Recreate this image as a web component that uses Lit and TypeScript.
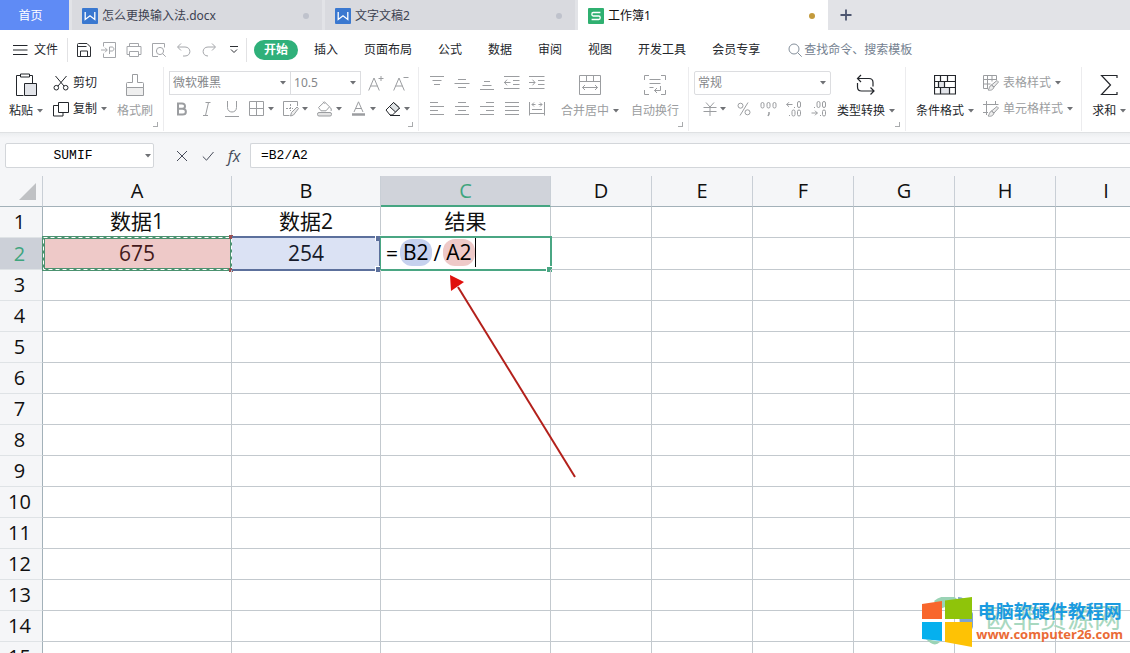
import { LitElement, html, svg, css, nothing, TemplateResult, SVGTemplateResult } from "lit";
import { customElement, property } from "lit/decorators.js";
import { classMap } from "lit/directives/class-map.js";
import { styleMap } from "lit/directives/style-map.js";

type Glyph = { w: number; h: number; body: SVGTemplateResult };

const GLYPHS: Record<string, Glyph> = {
  caret: { w: 6, h: 4, body: svg`<path d="M0 0h6L3 3.6z" fill="#6f7175" stroke="none"/>` },
  writer: {
    w: 16, h: 16,
    body: svg`<rect width="16" height="16" rx="1" fill="#3a78d0" stroke="none"/><path d="M3.2 4v7.500L8 7.800l4.800 3.700V4" stroke="#fff" stroke-width="1.3"/>`,
  },
  sheets: {
    w: 16, h: 16,
    body: svg`<rect width="16" height="16" rx="1" fill="#2fb070" stroke="none"/><path d="M12.4 4.5H5.2C3.4 4.5 3.4 8 5.2 8h5.6c1.900 0 1.900 3.500 0 3.500H3.600" stroke="#fff" stroke-width="1.3"/>`,
  },
  plus: { w: 12, h: 12, body: svg`<path d="M6 .5v11M.5 6h11" stroke="#4d5670" stroke-width="1.800"/>` },
  menu: { w: 15, h: 10, body: svg`<path d="M0 .5h14.500M0 5h14.500M0 9.500h14.500"/>` },
  save: { w: 16, h: 16, body: svg`<path d="M1.500 14.500v-12q0-1 1-1h8.500l3.500 3.500v9.500zM1.500 4.500h9M4.500 14.500v-5.500h7v5.500"/>` },
  pdf: { w: 16, h: 16, body: svg`<path d="M2.500 4.500v-4h12v15h-12v-4M0 8h6M4 5.700 6.300 8 4 10.300M8.500 12V5h2.500c2.500 0 2.500 4 0 4H8.500"/>` },
  print: { w: 16, h: 16, body: svg`<path d="M3.500 4.500v-3h9v3M3.500 12.500h-2.500v-8h14v8h-2.500M3.500 9.500h9v5h-9z"/>` },
  preview: { w: 16, h: 16, body: svg`<path d="M7 14.500H1.500v-13h12v4"/><circle cx="9" cy="9" r="3.600"/><path d="m11.700 11.700 3 3"/>` },
  undo: { w: 16, h: 16, body: svg`<path d="M5 1.500 1.500 5 5 8.500M2 5h7c6.500 0 6.500 9 0 9H7"/>` },
  redo: { w: 16, h: 16, body: svg`<path d="M11 1.500 14.500 5 11 8.500M14 5H7c-6.500 0-6.500 9 0 9"/>` },
  more: { w: 8, h: 8, body: svg`<path d="M0 .5h8M1 3.500l3 3 3-3"/>` },
  search: { w: 14, h: 14, body: svg`<circle cx="6" cy="6" r="5"/><path d="m9.700 9.700 4 4"/>` },
  paste: {
    w: 22, h: 24,
    body: svg`<path d="M8.500 22.500h-7v-20h4M14.500 2.500h3v8M5.500 1h9v3h-9z"/><path d="M9.500 10.500h12v12h-12z" fill="#e2e4e9"/>`,
  },
  cut: { w: 16, h: 16, body: svg`<path d="M2.500 1 11 11M13.500 1 5 11"/><circle cx="3.300" cy="12.700" r="2.300"/><circle cx="12.700" cy="12.700" r="2.300"/>` },
  copy: { w: 16, h: 16, body: svg`<path d="M5.500 1.500h10v10h-10zM5.500 4.500h-5v10.500h9.500v-3.500"/>` },
  brush: { w: 20, h: 24, body: svg`<path d="M7.500 9.500V1.500h5v8h5q1 0 1 1v4h-17v-4q0-1 1-1z"/><path d="M1.500 14.500h17v8h-17z" fill="#efefef"/>` },
  growFont: { w: 16, h: 16, body: svg`<path d="M.7 15.500 6 3l5.300 12.500M2.500 11h7M10.500 3.500h5M13 1v5"/>` },
  shrinkFont: { w: 16, h: 16, body: svg`<path d="M.7 15.500 6 3l5.300 12.500M2.500 11h7M10.500 2.500h5"/>` },
  bold: { w: 12, h: 14, body: svg`<path d="M2 1.500v11h4.500c4.500 0 4.500-5.700 0-5.700H2h4c4 0 4-5.300 0-5.300z" stroke-width="2"/>` },
  italic: { w: 10, h: 14, body: svg`<path d="M3.500.5h5M1 13.500h5M6.500.5l-3 13"/>` },
  underline: { w: 14, h: 16, body: svg`<path d="M2.500 0v6.500c0 6 9 6 9 0V0M0 15.500h14"/>` },
  borders: { w: 16, h: 16, body: svg`<path d="M.5 .5h14v14H.5zM7.500 .5v14M.5 7.500h14"/>` },
  drawBorder: { w: 16, h: 16, body: svg`<path d="M6.500 14.500h-6V.5h14V5"/><path d="M7.500 3v7M3 7.500h7" stroke-dasharray="2 1"/><path d="m7.500 15 1-3.500 5.500-5.500 1.500 1.500L10.500 14z" fill="#eee"/>` },
  fill: { w: 16, h: 16, body: svg`<path d="M1.500 6.500 7.500 .8l5 5-3.500 4h-5zM6 .8l2 2M12.500 6c2 1 2 3 1.500 4"/><rect x=".5" y="11.500" width="14" height="3.500" rx="1.500" fill="#e4e4e4"/>` },
  fontColor: { w: 16, h: 16, body: svg`<path d="M3 11 7.500 .8 12 11M4.700 7.500h5.600"/><path d="M1 13.500h13" stroke-width="2.500"/>` },
  eraser: { w: 16, h: 16, body: svg`<path d="M1 9 8.500 1.500l6 5.500L7.500 14H5z"/><path d="M4.500 5.500 8.500 1.500l6 5.500-4 4z" fill="#dfe3e5"/><path d="M5 14.500h10"/>` },
  alignTop: { w: 16, h: 16, body: svg`<path d="M1 1.500h14M3.500 5.500h9M5 9.500h6"/>` },
  alignMiddle: { w: 16, h: 16, body: svg`<path d="M4 4.500h8M.5 8.500h15M4 12.500h8"/>` },
  alignBottom: { w: 16, h: 16, body: svg`<path d="M5 6.500h6M3.500 10.500h9M1 14.500h14"/>` },
  outdent: { w: 16, h: 16, body: svg`<path d="M0 1.500h15.500M9 5.500h6.500M9 9.500h6.500M0 13.500h15.500M0 7.500h6.500M3 4.700.5 7.500 3 10.300"/>` },
  indent: { w: 16, h: 16, body: svg`<path d="M0 1.500h15.500M9 5.500h6.500M9 9.500h6.500M0 13.500h15.500M0 7.500h6M3.500 4.700 6 7.500 3.500 10.300"/>` },
  left: { w: 16, h: 16, body: svg`<path d="M1 1.500h8M1 5.500h14M1 9.500h8M1 13.500h14"/>` },
  center: { w: 16, h: 16, body: svg`<path d="M4 1.500h8M1 5.500h14M4 9.500h8M1 13.500h14"/>` },
  right: { w: 16, h: 16, body: svg`<path d="M7 1.500h8M1 5.500h14M7 9.500h8M1 13.500h14"/>` },
  justify: { w: 16, h: 16, body: svg`<path d="M1 1.500h14M1 5.500h14M1 9.500h14M1 13.500h14"/>` },
  distribute: { w: 16, h: 16, body: svg`<path d="M.5 1v13.500M15.500 1v13.500M3 8.500h10M.5 12.500h15M3 3.500h3.500M9.500 3.500H13M5 1.500 3 3.500l2 2M11 1.500l2 2-2 2"/>` },
  merge: { w: 22, h: 20, body: svg`<path d="M.5 .5h21v19H.5zM.5 6.500h21M7.500 .5v6M14.500 .5v6M3.500 12.500h15M6 10l-2.500 2.500L6 15M16 10l2.500 2.500L16 15"/>` },
  wrap: { w: 22, h: 20, body: svg`<path d="M.5 5V.5H5M17 .5h4.500V5M.5 15v4.500H5M17 19.500h4.500V15M5.500 4.500h11M5.500 8.500h11M5.500 12.500h4M16.500 11v4.500h-6M13 13l-2.500 2.500L13 18"/>` },
  yuan: { w: 14, h: 14, body: svg`<path d="M3 .5l4 4.500 4-4.500M.5 5.500h13M.5 9.500h13M7 5v9"/>` },
  percent: { w: 14, h: 14, body: svg`<circle cx="3.500" cy="3.700" r="2.500"/><circle cx="10.500" cy="10.300" r="2.500"/><path d="M11 .5 3 13.500"/>` },
  thousands: { w: 18, h: 16, body: svg`<rect x="1" y="1.500" width="3" height="5.500" rx="1.500"/><rect x="7" y="1.500" width="3" height="5.500" rx="1.500"/><rect x="13" y="1.500" width="3" height="5.500" rx="1.500"/><path d="M9 11v2l-1 2" stroke-width="1.500"/>` },
  moreDecimals: { w: 16, h: 16, body: svg`<path d="M.5 3.500h6M3 1.200.7 3.500 3 5.800M8.500 6v1M3.500 14v1"/><rect x="11.500" y=".5" width="3" height="6" rx="1.500"/><rect x="6" y="9" width="3" height="6" rx="1.500"/><rect x="11.500" y="9" width="3" height="6" rx="1.500"/>` },
  lessDecimals: { w: 16, h: 16, body: svg`<path d="M.5 12h6M4 9.700 6.300 12 4 14.300M9.500 14v1M3.500 6v1"/><rect x="11.500" y=".5" width="3" height="6" rx="1.500"/><rect x="6" y=".5" width="3" height="6" rx="1.500"/><rect x="11.500" y="9" width="3" height="6" rx="1.500"/>` },
  convert: { w: 20, h: 22, body: svg`<path d="M5 1 1.500 4.500 5 8M2 4.500h11q4 0 4 4v4M1.500 9v4q0 4 4 4H18M14.500 13.500 18 17l-3.500 3.500" stroke-width="1.200"/>` },
  conditional: {
    w: 22, h: 20,
    body: svg`<path d="M5 6.500h6v6H5zM7 12.500h9v6.500H7z" fill="#e2e4e9" stroke="none"/><path d="M.5 .5h21v18.500H.5zM.5 6.500h21M.5 12.500h21M6.500 .5v6M13.500 .5v6M10.500 6.500v6M4.500 6.500v6M6.500 12.500v6.500M15.500 12.500v6.500" stroke-width="1.200"/>`,
  },
  tableStyle: { w: 16, h: 16, body: svg`<path d="M5 13.500H.5V.5h13V5M.5 4.500h13M.5 9h7M4.500 .5v13M9 .5v6"/><path d="m8.500 10 5.500-4.500 1.500 1.500-4.500 5zM8.500 10l2.500 2c-1 3.500-4 3.500-6 3 1.500-1 1-4 3.500-5z" fill="#eee"/>` },
  cellStyle: { w: 16, h: 16, body: svg`<path d="M3.500 0v14M12.500 0v4M0 3.500h15.500M0 11.500h5"/><path d="m8.500 10 5.500-4.500 1.500 1.500-4.500 5zM8.500 10l2.500 2c-1 3.500-4 3.500-6 3 1.500-1 1-4 3.500-5z" fill="#eee"/>` },
  sum: { w: 18, h: 20, body: svg`<path d="M17 3V.5H1.500L10.500 10 1.500 19.500H17V17" stroke-width="1.200"/>` },
  cancel: { w: 12, h: 12, body: svg`<path d="m1 1 10 10M11 1 1 11"/>` },
  accept: { w: 12, h: 12, body: svg`<path d="m.8 6.500 3.700 3.700L11.500 2"/>` },
};

@customElement("wps-icon")
class WpsIcon extends LitElement {
  static styles = css`
    :host { display: inline-flex; flex: none; }
    svg { display: block; fill: none; stroke: currentColor; stroke-width: 1; }
  `;
  @property() name = "caret";
  render() {
    const g = GLYPHS[this.name];
    return html`<svg width=${g.w} height=${g.h} viewBox="0 0 ${g.w} ${g.h}" aria-hidden="true">${g.body}</svg>`;
  }
}

const COLUMNS = [
  { id: "A", width: 189 }, { id: "B", width: 149 }, { id: "C", width: 170 },
  ..."DEFGHI".split("").map((id) => ({ id, width: 101 })),
];
const VALUES: Record<string, string> = { A1: "数据1", B1: "数据2", C1: "结果", A2: "675", B2: "254" };
const MENU_TABS = ["插入", "页面布局", "公式", "数据", "审阅", "视图", "开发工具", "会员专享"];
const QUICK = [
  ["save", "保存"], ["pdf", "输出为PDF"], ["print", "打印"], ["preview", "打印预览"],
  ["undo", "撤销"], ["redo", "恢复"], ["more", "自定义"],
];

@customElement("app-root")
class AppRoot extends LitElement {
  static styles = css`
    :host {
      display: flex; flex-direction: column; height: 100vh; overflow: hidden;
      background: #fff; color: #23262b;
      font: 12px/16px "Noto Sans", "Noto Sans CJK SC", sans-serif;
    }
    * { box-sizing: border-box; }
    button, input, select {
      font: inherit; color: inherit; border: 0; margin: 0; padding: 0; background: none; outline: none;
    }
    button { display: flex; align-items: center; justify-content: center; white-space: nowrap; flex: none; }

    .tabs { display: flex; flex: none; height: 30px; background: #e2e3e7; }
    .home { width: 69px; background: #5f8bf5; color: #fff; margin-right: 3px; padding: 2px 8px 0 0; }
    .doc { display: flex; align-items: center; gap: 4px; width: 250px; margin-right: 3px; padding: 2px 13px 0 10px; background: #d9dadf; color: #3d4251; }
    .doc.current { background: #fff; color: #111; margin-right: 0; }
    .doc button { flex: 1; justify-content: flex-start; gap: 4px; }
    .dot { width: 6px; height: 6px; border-radius: 50%; background: #bfc2cc; }
    .current .dot { background: #c39a3c; }
    .new { width: 36px; }

    .menu { display: flex; flex: none; align-items: center; height: 36px; padding: 3px 0 0 13px; }
    .file { gap: 6px; }
    .rule { width: 1px; height: 24px; background: #e2e2e4; }
    .file + .rule { margin: 0 3px 0 9px; }
    .quick { display: flex; color: #a4a6aa; }
    .quick button { width: 25px; height: 24px; }
    .quick button:first-child, .quick button:last-child { color: #2d3035; }
    .pill { margin: 0 16px 0 7px; width: 44px; height: 20px; border-radius: 10px; background: #2fb07a; color: #fff; font-weight: 700; }
    .menu-tabs { display: flex; gap: 26px; margin-right: 28px; }
    .search { display: flex; align-items: center; gap: 2px; flex: 1; color: #85909c; }
    .search input { flex: 1; min-width: 0; }
    .search input::placeholder { color: #748190; opacity: 1; }

    .ribbon { display: flex; flex: none; height: 67px; padding: 1px 0; border-bottom: 1px solid #dfe1e3; }
    .group { position: relative; display: flex; flex: none; padding: 3px 0 8px; border-right: 1px solid #ececee; }
    .group:last-child { border: 0; }
    .corner { position: absolute; right: 5px; bottom: 4px; width: 5px; height: 5px; border: solid #a9abad; border-width: 0 1px 1px 0; }
    .clip { padding-left: 9px; padding-right: 10px; gap: 10px; }
    .font { padding-left: 5px; padding-right: 4px; }
    .align { padding-left: 5px; padding-right: 9px; gap: 12px; }
    .number { padding-left: 5px; padding-right: 10px; gap: 6px; }
    .styles { padding-left: 10px; padding-right: 8px; gap: 9px; }
    .total { padding-left: 10px; }
    .rows { display: flex; flex-direction: column; }
    .row { display: flex; align-items: center; height: 26px; }
    .tall { flex-direction: column; justify-content: space-between; padding: 2px 0 4px; }
    .tall .art { display: flex; align-items: center; height: 26px; }
    .label, .line { display: flex; align-items: center; gap: 4px; }
    .line { height: 26px; justify-content: flex-start; }
    .small { width: 25px; height: 26px; }
    .drop { width: 34px; height: 26px; gap: 3px; }
    .off { color: #9b9da0; }
    .number .row + .row { padding-left: 3px; }

    .picker { position: relative; display: flex; align-items: center; height: 24px; border: 1px solid #dcdde0; background: #fff; color: #85878a; }
    .picker select { appearance: none; width: 100%; height: 100%; padding-left: 3px; }
    .picker wps-icon { position: absolute; right: 4px; pointer-events: none; }
    .family { width: 122px; }
    .size { width: 71px; margin: 0 2px 0 -1px; }
    .format { width: 137px; border-radius: 2px; }

    .formula { display: flex; flex: none; height: 43px; padding-top: 10px; padding-left: 5px; background: linear-gradient(#eceef0, #f5f6f8 5px); }
    .namebox { position: relative; display: flex; align-items: center; width: 149px; height: 25px; border: 1px solid #d3d6da; border-radius: 2px; background: #fff; }
    .namebox input, .expr { font: 13px/20px "Liberation Mono", monospace; color: #000; }
    .namebox input { width: 100%; padding-right: 13px; text-align: center; }
    .namebox wps-icon { position: absolute; right: 2px; }
    .actions { display: flex; padding: 0 3px 0 15px; color: #474c5a; }
    .actions button { width: 26px; height: 25px; }
    .fx { font: italic 16px/20px "Open Sans", sans-serif; }
    .expr { flex: 1; min-width: 0; height: 25px; padding-left: 10px; border: 1px solid #d3d6da; border-right: 0; border-radius: 2px 0 0 2px; background: #fff; }

    .sheet { position: relative; flex: 1; min-height: 0; overflow: hidden; }
    table { table-layout: fixed; width: 1157px; border-collapse: separate; border-spacing: 0; font-family: "Open Sans", "Noto Sans CJK SC", sans-serif; font-size: 21px; line-height: 24px; color: #101010; }
    th, td { height: 31px; padding: 0; border: solid #c3c9ce; border-width: 0 1px 1px 0; text-align: center; font-weight: 400; white-space: nowrap; }
    td { position: relative; padding-bottom: 2px; }
    thead th { font-size: 20px; background: #f5f6f8; border-bottom-color: #a3b1b9; border-right-color: #c9cfd6; }
    thead th.on { background: #d0d3da; color: #3fa57e; box-shadow: inset 0 -1px #45a582; border-bottom-color: #45a582; }
    tbody th { font-size: 20px; background: #f5f6f8; border-right-color: #a3b1b9; border-bottom-color: #dfe3e6; padding-right: 3px; }
    tbody th.on { background: #ccd0d8; color: #3fa57e; }
    tr.active th, tr.active td { height: 32px; }
    .all { display: block; margin: 0 6px 0 auto; }
    .refA { background: #eec9c8; color: #43191b; }
    .refB { background: #dbe2f4; color: #15192a; }
    .ants { position: absolute; top: -1px; left: 0; width: 100%; height: calc(100% + 1px); overflow: visible; fill: none; }
    .frame { position: absolute; top: -2px; right: -1px; bottom: -2px; left: 0; border: 2px solid #5c709c; border-left: 0; }
    .edit { border: 2px solid #4aa683; left: -1px; right: -2px; border-left: 1px solid #4aa683; }
    .knob { position: absolute; right: -2px; width: 6px; height: 6px; border: solid #fff; border-width: 1px 0 0 1px; background: #5c709c; }
    .knob.up { top: -3px; }
    .knob.down { bottom: -3px; }
    .edit .knob { background: #4aa683; }
    .refA .knob { background: #9c4f52; border: 0; width: 4px; height: 4px; }
    .typing { display: flex; align-items: center; gap: 2px; height: 29px; padding-left: 5px; color: #000; }
    .mark { padding: 0 3px; height: 27px; line-height: 26px; border-radius: 12px; }
    .blue { background: #c6d1ee; }
    .red { background: #eec9c8; }
    .cursor { width: 1px; height: 29px; margin-left: -2px; background: #000; }
    .pointer { position: absolute; left: 440px; top: 92px; }

    .brand { position: absolute; right: 7px; bottom: 6px; display: flex; align-items: center; gap: 3px; }
    .words { display: flex; flex-direction: column; gap: 4px; padding-bottom: 4px; }
    .brand p { margin: 0; text-align: center; white-space: nowrap; }
    .site { position: relative; color: #1b9be0; font: 700 18px/24px "Noto Sans CJK SC", sans-serif; }
    .url { position: relative; color: #ea6a35; font: 700 13px/16px "Open Sans", sans-serif; }
    .brand .ghost { position: absolute; right: 2px; top: 5px; color: #a8d8c0; font: 27px/30px "Noto Sans CJK SC", sans-serif; }
  `;

  private icon(name: string) { return html`<wps-icon name=${name}></wps-icon>`; }

  private small(name: string, title: string) {
    return html`<button class="small off" aria-label=${title}>${this.icon(name)}</button>`;
  }
  private drop(name: string, title: string, enabled = false) {
    return html`<button class=${classMap({ drop: true, off: !enabled })} aria-label=${title}>${this.icon(name)}${this.icon("caret")}</button>`;
  }
  private tall(name: string, text: string, off = false, menu = true) {
    return html`<button class=${classMap({ tall: true, off })}>
      <span class="art">${this.icon(name)}</span>
      <span class="label">${text}${menu ? this.icon("caret") : nothing}</span>
    </button>`;
  }
  private line(name: string, text: string, off = false, menu = true) {
    return html`<button class=${classMap({ line: true, off })}>${this.icon(name)}<span class="label">${text}${menu ? this.icon("caret") : nothing}</span></button>`;
  }
  private picker(kind: string, title: string, value: string) {
    return html`<label class="picker ${kind}"><select aria-label=${title}><option>${value}</option></select>${this.icon("caret")}</label>`;
  }
  private doc(icon: string, text: string, current = false) {
    return html`<div class=${classMap({ doc: true, current })}><button>${this.icon(icon)}${text}</button><i class="dot"></i></div>`;
  }

  private renderRibbon() {
    return html`<section class="ribbon">
      <div class="group clip">
        ${this.tall("paste", "粘贴")}
        <div class="rows">${this.line("cut", "剪切", false, false)}${this.line("copy", "复制")}</div>
        ${this.tall("brush", "格式刷", true, false)}
        <i class="corner"></i>
      </div>
      <div class="group font">
        <div class="rows">
          <div class="row">${this.picker("family", "字体", "微软雅黑")}${this.picker("size", "字号", "10.5")}${this.small("growFont", "增大字号")}${this.small("shrinkFont", "减小字号")}</div>
          <div class="row">${this.small("bold", "加粗")}${this.small("italic", "倾斜")}${this.small("underline", "下划线")}${this.drop("borders", "边框")}${this.drop("drawBorder", "绘图边框")}${this.drop("fill", "填充颜色")}${this.drop("fontColor", "字体颜色")}${this.drop("eraser", "清除", true)}</div>
        </div>
        <i class="corner"></i>
      </div>
      <div class="group align">
        <div class="rows">
          <div class="row">${["alignTop", "alignMiddle", "alignBottom", "outdent", "indent"].map((n) => this.small(n, n))}</div>
          <div class="row">${["left", "center", "right", "justify", "distribute"].map((n) => this.small(n, n))}</div>
        </div>
        ${this.tall("merge", "合并居中", true)}
        ${this.tall("wrap", "自动换行", true, false)}
        <i class="corner"></i>
      </div>
      <div class="group number">
        <div class="rows">
          <div class="row">${this.picker("format", "数字格式", "常规")}</div>
          <div class="row">${this.drop("yuan", "货币")}${this.small("percent", "百分比")}${this.small("thousands", "千位分隔")}${this.small("moreDecimals", "增加小数位")}${this.small("lessDecimals", "减少小数位")}</div>
        </div>
        ${this.tall("convert", "类型转换")}
        <i class="corner"></i>
      </div>
      <div class="group styles">
        ${this.tall("conditional", "条件格式")}
        <div class="rows">${this.line("tableStyle", "表格样式", true)}${this.line("cellStyle", "单元格样式", true)}</div>
      </div>
      <div class="group total">${this.tall("sum", "求和")}</div>
    </section>`;
  }

  private renderCell(col: string, row: number): TemplateResult {
    const id = col + row;
    if (id === "A2") {
      return html`<td class="refA">675<svg class="ants" aria-hidden="true">
        <rect x=".5" y=".5" width="100%" height="100%" stroke="#4c9270" stroke-width="3"/>
        <rect x=".5" y=".5" width="100%" height="100%" stroke="#fff" stroke-width="1" stroke-dasharray="4 3"/>
      </svg><i class="knob up"></i><i class="knob down"></i></td>`;
    }
    if (id === "B2") return html`<td class="refB">254<div class="frame"><i class="knob up"></i><i class="knob down"></i></div></td>`;
    if (id === "C2") {
      return html`<td><div class="typing"><span>=</span><span class="mark blue">B2</span><span>/</span><span class="mark red">A2</span><i class="cursor"></i></div><div class="frame edit"><i class="knob down"></i></div></td>`;
    }
    return html`<td>${VALUES[id] ?? nothing}</td>`;
  }

  private renderSheet() {
    return html`<main class="sheet">
      <table>
        <colgroup><col style=${styleMap({ width: "43px" })} />${COLUMNS.map((c) => html`<col style=${styleMap({ width: c.width + "px" })} />`)}</colgroup>
        <thead><tr>
          <th aria-label="全选"><svg class="all" width="17" height="17" viewBox="0 0 17 17"><path d="M17 0v17H0z" fill="#bfc1c4"/></svg></th>
          ${COLUMNS.map((c) => html`<th scope="col" class=${classMap({ on: c.id === "C" })}>${c.id}</th>`)}
        </tr></thead>
        <tbody>${Array.from({ length: 15 }, (_, i) => i + 1).map((r) => html`
          <tr class=${classMap({ active: r === 2 })}>
            <th scope="row" class=${classMap({ on: r === 2 })}>${r}</th>
            ${COLUMNS.map((c) => this.renderCell(c.id, r))}
          </tr>`)}</tbody>
      </table>
      <svg class="pointer" width="144" height="216" viewBox="0 0 144 216" aria-hidden="true">
        <path d="M18 19 135 209" stroke="#b3201b" stroke-width="2"/><path d="M10 7l14 7-13 9z" fill="#e0100c"/>
      </svg>
      <div class="brand">
        <svg width="51" height="50" viewBox="0 0 51 50" aria-hidden="true">
          <path d="M12 4C22-4 36-2 36 5L18 12zM4 42q8 9 14 3z" fill="#9ad3b5"/><path d="M36 0q8 0 10 8 12 14 0 32L38 30z" fill="#7da3d4"/>
          <path d="M0 7l20-3v18H0z" fill="#f8662c"/><path d="M23 3.500 50 0v22H23z" fill="#8fc40a"/>
          <path d="M0 25h20v19L0 42z" fill="#06b0ee"/><path d="M23 25h27v25l-27-5z" fill="#fec205"/>
        </svg>
        <div class="words">
          <p class="ghost">欧菲资源网</p>
          <p class="site">电脑软硬件教程网</p>
          <p class="url">www.computer26.com</p>
        </div>
      </div>
    </main>`;
  }

  render() {
    return html`
      <nav class="tabs">
        <button class="home">首页</button>
        ${this.doc("writer", "怎么更换输入法.docx")}${this.doc("writer", "文字文稿2")}${this.doc("sheets", "工作簿1", true)}
        <button class="new" aria-label="新建">${this.icon("plus")}</button>
      </nav>
      <nav class="menu">
        <button class="file">${this.icon("menu")}文件</button><i class="rule"></i>
        <div class="quick">${QUICK.map(([n, t]) => html`<button aria-label=${t}>${this.icon(n)}</button>`)}</div>
        <i class="rule"></i>
        <button class="pill">开始</button>
        <div class="menu-tabs">${MENU_TABS.map((t) => html`<button>${t}</button>`)}</div>
        <label class="search">${this.icon("search")}<input type="text" aria-label="查找" placeholder="查找命令、搜索模板" /></label>
      </nav>
      ${this.renderRibbon()}
      <section class="formula">
        <label class="namebox"><input aria-label="名称框" value="SUMIF" />${this.icon("caret")}</label>
        <div class="actions">
          <button aria-label="取消">${this.icon("cancel")}</button>
          <button aria-label="输入">${this.icon("accept")}</button>
          <button class="fx">fx</button>
        </div>
        <input class="expr" aria-label="编辑栏" value="=B2/A2" />
      </section>
      ${this.renderSheet()}`;
  }
}
